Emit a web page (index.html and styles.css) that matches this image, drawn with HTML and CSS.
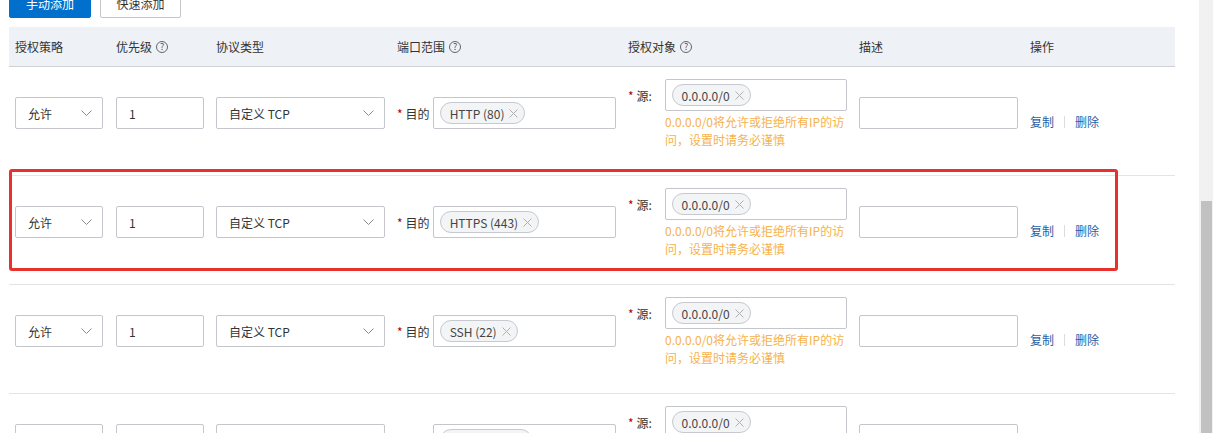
FILE: index.html
```html
<!DOCTYPE html>
<html>
<head>
  <meta charset="UTF-8">
  <meta name="viewport" content="width=device-width,initial-scale=1">
  <title>安全组规则</title>
  <link rel="stylesheet" href="styles.css">
</head>
<body>
<div class="page">
  <div class="main">
    <div class="toolbar">
      <button class="btn primary">手动添加</button>
      <button class="btn">快速添加</button>
    </div>

    <div class="ruletable">
      <div class="head">
        <div class="c1">授权策略</div>
        <div class="c2">优先级 <span class="help">?</span></div>
        <div class="c3">协议类型</div>
        <div class="c4">端口范围 <span class="help">?</span></div>
        <div class="c5">授权对象 <span class="help">?</span></div>
        <div class="c6">描述</div>
        <div class="c7">操作</div>
      </div>

      <!-- 行1 -->
      <div class="row">
        <div class="c1 ctl"><div class="field select w88"><span>允许</span><svg class="arrow" width="11" height="7" viewBox="0 0 11 7"><polyline points="0.5,0.5 5.5,5.5 10.5,0.5" fill="none" stroke="#8a8a8a" stroke-width="1"/></svg></div></div>
        <div class="c2 ctl"><div class="field w88">1</div></div>
        <div class="c3 ctl"><div class="field select w169"><span>自定义 TCP</span><svg class="arrow" width="11" height="7" viewBox="0 0 11 7"><polyline points="0.5,0.5 5.5,5.5 10.5,0.5" fill="none" stroke="#8a8a8a" stroke-width="1"/></svg></div></div>
        <div class="c4 ctl"><span class="req">*</span><span class="lbl">目的</span><div class="field tagbox w183"><span class="tag">HTTP (80)<svg class="x" width="9" height="9" viewBox="0 0 9 9"><path d="M0.5 0.5L8.5 8.5M8.5 0.5L0.5 8.5" stroke="#b0b0b0" stroke-width="1"/></svg></span></div></div>
        <div class="c5 src">
          <div class="srcline"><span class="req">*</span><span class="lbl">源:</span><div class="field tagbox w182"><span class="tag">0.0.0.0/0<svg class="x" width="9" height="9" viewBox="0 0 9 9"><path d="M0.5 0.5L8.5 8.5M8.5 0.5L0.5 8.5" stroke="#b0b0b0" stroke-width="1"/></svg></span></div></div>
          <div class="hint">0.0.0.0/0将允许或拒绝所有IP的访问，设置时请务必谨慎</div>
        </div>
        <div class="c6 ctl"><div class="field w159"></div></div>
        <div class="c7 ops"><a>复制</a><span class="sep"></span><a>删除</a></div>
      </div>

      <!-- 行2 -->
      <div class="row">
        <div class="mark"></div>
        <div class="c1 ctl"><div class="field select w88"><span>允许</span><svg class="arrow" width="11" height="7" viewBox="0 0 11 7"><polyline points="0.5,0.5 5.5,5.5 10.5,0.5" fill="none" stroke="#8a8a8a" stroke-width="1"/></svg></div></div>
        <div class="c2 ctl"><div class="field w88">1</div></div>
        <div class="c3 ctl"><div class="field select w169"><span>自定义 TCP</span><svg class="arrow" width="11" height="7" viewBox="0 0 11 7"><polyline points="0.5,0.5 5.5,5.5 10.5,0.5" fill="none" stroke="#8a8a8a" stroke-width="1"/></svg></div></div>
        <div class="c4 ctl"><span class="req">*</span><span class="lbl">目的</span><div class="field tagbox w183"><span class="tag">HTTPS (443)<svg class="x" width="9" height="9" viewBox="0 0 9 9"><path d="M0.5 0.5L8.5 8.5M8.5 0.5L0.5 8.5" stroke="#b0b0b0" stroke-width="1"/></svg></span></div></div>
        <div class="c5 src">
          <div class="srcline"><span class="req">*</span><span class="lbl">源:</span><div class="field tagbox w182"><span class="tag">0.0.0.0/0<svg class="x" width="9" height="9" viewBox="0 0 9 9"><path d="M0.5 0.5L8.5 8.5M8.5 0.5L0.5 8.5" stroke="#b0b0b0" stroke-width="1"/></svg></span></div></div>
          <div class="hint">0.0.0.0/0将允许或拒绝所有IP的访问，设置时请务必谨慎</div>
        </div>
        <div class="c6 ctl"><div class="field w159"></div></div>
        <div class="c7 ops"><a>复制</a><span class="sep"></span><a>删除</a></div>
      </div>

      <!-- 行3 -->
      <div class="row">
        <div class="c1 ctl"><div class="field select w88"><span>允许</span><svg class="arrow" width="11" height="7" viewBox="0 0 11 7"><polyline points="0.5,0.5 5.5,5.5 10.5,0.5" fill="none" stroke="#8a8a8a" stroke-width="1"/></svg></div></div>
        <div class="c2 ctl"><div class="field w88">1</div></div>
        <div class="c3 ctl"><div class="field select w169"><span>自定义 TCP</span><svg class="arrow" width="11" height="7" viewBox="0 0 11 7"><polyline points="0.5,0.5 5.5,5.5 10.5,0.5" fill="none" stroke="#8a8a8a" stroke-width="1"/></svg></div></div>
        <div class="c4 ctl"><span class="req">*</span><span class="lbl">目的</span><div class="field tagbox w183"><span class="tag">SSH (22)<svg class="x" width="9" height="9" viewBox="0 0 9 9"><path d="M0.5 0.5L8.5 8.5M8.5 0.5L0.5 8.5" stroke="#b0b0b0" stroke-width="1"/></svg></span></div></div>
        <div class="c5 src">
          <div class="srcline"><span class="req">*</span><span class="lbl">源:</span><div class="field tagbox w182"><span class="tag">0.0.0.0/0<svg class="x" width="9" height="9" viewBox="0 0 9 9"><path d="M0.5 0.5L8.5 8.5M8.5 0.5L0.5 8.5" stroke="#b0b0b0" stroke-width="1"/></svg></span></div></div>
          <div class="hint">0.0.0.0/0将允许或拒绝所有IP的访问，设置时请务必谨慎</div>
        </div>
        <div class="c6 ctl"><div class="field w159"></div></div>
        <div class="c7 ops"><a>复制</a><span class="sep"></span><a>删除</a></div>
      </div>

      <!-- 行4 -->
      <div class="row">
        <div class="c1 ctl"><div class="field select w88"><span>允许</span><svg class="arrow" width="11" height="7" viewBox="0 0 11 7"><polyline points="0.5,0.5 5.5,5.5 10.5,0.5" fill="none" stroke="#8a8a8a" stroke-width="1"/></svg></div></div>
        <div class="c2 ctl"><div class="field w88">1</div></div>
        <div class="c3 ctl"><div class="field select w169"><span>自定义 TCP</span><svg class="arrow" width="11" height="7" viewBox="0 0 11 7"><polyline points="0.5,0.5 5.5,5.5 10.5,0.5" fill="none" stroke="#8a8a8a" stroke-width="1"/></svg></div></div>
        <div class="c4 ctl"><span class="req">*</span><span class="lbl">目的</span><div class="field tagbox w183"><span class="tag">RDP (3389)<svg class="x" width="9" height="9" viewBox="0 0 9 9"><path d="M0.5 0.5L8.5 8.5M8.5 0.5L0.5 8.5" stroke="#b0b0b0" stroke-width="1"/></svg></span></div></div>
        <div class="c5 src">
          <div class="srcline"><span class="req">*</span><span class="lbl">源:</span><div class="field tagbox w182"><span class="tag">0.0.0.0/0<svg class="x" width="9" height="9" viewBox="0 0 9 9"><path d="M0.5 0.5L8.5 8.5M8.5 0.5L0.5 8.5" stroke="#b0b0b0" stroke-width="1"/></svg></span></div></div>
          <div class="hint">0.0.0.0/0将允许或拒绝所有IP的访问，设置时请务必谨慎</div>
        </div>
        <div class="c6 ctl"><div class="field w159"></div></div>
        <div class="c7 ops"><a>复制</a><span class="sep"></span><a>删除</a></div>
      </div>
    </div>
  </div>

  <div class="scrollbar"><div class="thumb"></div></div>
</div>
</body>
</html>
```

FILE: styles.css
```css
html, body {
  margin: 0;
  padding: 0;
}

body {
  font-family: "Noto Sans CJK SC", "Microsoft YaHei", sans-serif;
  font-size: 12px;
  color: #333333;
  background: #ffffff;
}

.page {
  display: flex;
  height: 433px;
  overflow: hidden;
}

.main {
  flex: 1;
  padding-left: 9px;
}

/* 上のボタン */

.toolbar {
  display: flex;
  gap: 9px;
  margin-top: -12px;
  height: 30px;
}

.btn {
  height: 30px;
  width: 81px;
  padding: 0;
  border: 1px solid #c5c5c5;
  border-radius: 2px;
  background: #ffffff;
  color: #333333;
  font-family: inherit;
  font-size: 12px;
}

.btn.primary {
  width: 82px;
  border-color: #0070cc;
  background: #0070cc;
  color: #ffffff;
}

/* テーブル */

.ruletable {
  margin-top: 9px;
  width: 1166px;
}

.head {
  display: flex;
  align-items: center;
  height: 39px;
  background: #eef1f6;
  border-bottom: 1px solid #cfd2d6;
  color: #333333;
}

.row {
  position: relative;
  display: flex;
  align-items: flex-start;
  height: 96px;
  padding-top: 12px;
  border-bottom: 1px solid #e4e4e4;
}

.c1 { width: 101px; padding-left: 6px; }
.c2 { width: 100px; }
.c3 { width: 181px; }
.c4 { width: 231px; }
.c5 { width: 231px; }
.c6 { width: 171px; }
.c7 { flex: 1; }

.head > div {
  display: flex;
  align-items: center;
}

.help {
  display: inline-flex;
  align-items: center;
  justify-content: center;
  width: 10px;
  height: 10px;
  margin-left: 4px;
  border: 1px solid #666666;
  border-radius: 50%;
  font-size: 9px;
  line-height: 1;
  color: #555555;
}

.ctl {
  display: flex;
  align-items: center;
  margin-top: 18px;
}

.field {
  box-sizing: border-box;
  display: flex;
  align-items: center;
  height: 32px;
  padding: 0 12px;
  border: 1px solid #c4c6cc;
  border-radius: 2px;
  background: #ffffff;
}

.w88 { width: 88px; }
.w169 { width: 169px; }
.w183 { width: 183px; }
.w182 { width: 182px; }
.w159 { width: 159px; }

.select {
  justify-content: space-between;
  padding-right: 10px;
}

.tagbox {
  padding: 0 6px;
}

.tag {
  display: inline-flex;
  align-items: center;
  gap: 5px;
  height: 20px;
  padding: 0 6px 0 9px;
  border: 1px solid #c6c9cf;
  border-radius: 11px;
  background: #f3f4f6;
  color: #444444;
}

.req {
  color: #b30000;
  margin-right: 3px;
  font-size: 12px;
}

.lbl {
  margin-right: 3px;
}

.src .srcline {
  display: flex;
  align-items: center;
}

.src .lbl {
  width: 25px;
}

.hint {
  width: 182px;
  margin-left: 37px;
  margin-top: 2px;
  line-height: 18px;
  color: #f6b24c;
}

.ops {
  display: flex;
  align-items: center;
  margin-top: 34px;
}

.ops a {
  color: #1f5fa8;
  cursor: pointer;
}

.sep {
  width: 1px;
  height: 12px;
  margin: 0 10px;
  background: #dcdcdc;
}

/* 赤い枠 */

.mark {
  position: absolute;
  left: 0;
  top: -7px;
  width: 1103px;
  height: 96px;
  border: 3px solid #e8302c;
  border-radius: 3px;
  pointer-events: none;
}

/* スクロールバー */

.scrollbar {
  width: 14px;
  background: #f1f1f1;
  padding-top: 201px;
  box-sizing: border-box;
}

.thumb {
  width: 11px;
  height: 300px;
  margin-left: 2px;
  background: #c1c1c1;
}
```
